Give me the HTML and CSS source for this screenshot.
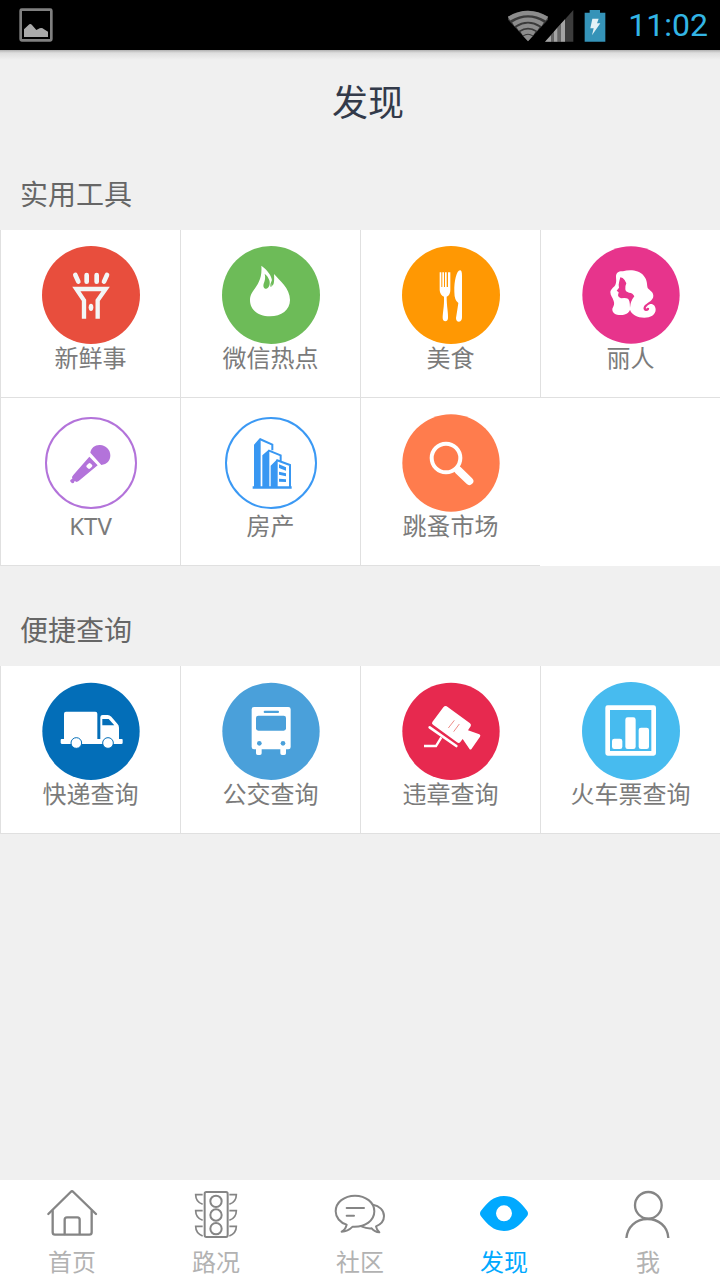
FILE: index.html
```html
<!DOCTYPE html>
<html lang="zh-CN">
<head>
<meta charset="utf-8">
<meta name="viewport" content="width=device-width, initial-scale=1">
<title>发现</title>
<link rel="stylesheet" href="styles.css">
</head>
<body>
<div class="screen">
  <div class="status">
    <svg class="status-photo" viewBox="57 24 102 102" aria-hidden="true">
      <rect x="62" y="29" width="92" height="92" rx="3" fill="none" stroke="#808080" stroke-width="8"/>
      <path d="M72 111V88L88 73Q92 70 96 75L109 90L119 85Q126 82 132 88L144 95V111Z" fill="#aaa"/>
    </svg>
    <div class="status-right">
      <svg class="status-signal" viewBox="87 24 198 99" aria-hidden="true">
        <path d="M87 47Q147 12 207 47V56L147 121L87 56Z" fill="#3a3a3a"/>
        <g fill="none" stroke="#8c8c8c" stroke-width="13">
          <path d="M90 53Q147 19 204 53"/>
          <path d="M103 70Q147 42 191 70"/>
          <path d="M116 84Q147 64 178 84"/>
          <path d="M128 98Q147 86 166 98"/>
        </g>
        <path d="M133 106Q147 97 161 106L147 121Z" fill="#8c8c8c"/>
        <path d="M198 122L283 27V122Z" fill="#3c3c3c"/>
        <path d="M198 122L217 101V122ZM224 122V93L236 79V122ZM245 122V69L258 55V122Z" fill="#a3a3a3"/>
        <path d="M217 122V101L224 93V122ZM236 122V79L245 69V122Z" fill="#666"/>
      </svg>
      <svg class="status-battery" viewBox="315 24 66 99" aria-hidden="true">
        <path d="M317 35H332V27H363V35H379V122H317Z" fill="#3593b8"/>
        <path d="M340 53H359L354 67H364L339 103L344 82H334Z" fill="#e3f1f6"/>
      </svg>
      <time class="clock">11:02</time>
    </div>
  </div>

  <header class="header"><h1 class="title">发现</h1></header>

  <main class="content">
    <section class="group">
      <h2 class="group-title">实用工具</h2>
      <div class="grid">
        <a class="cell" href="#">
          <svg class="cell-icon" viewBox="126 258 294 294" aria-hidden="true">
            <circle cx="273" cy="405" r="147" fill="#e84e3d"/>
            <g fill="none" stroke="#f3f6f6" stroke-width="14">
              <path stroke-linecap="round" d="M226 345L235 365M260 345V365M290 345V365M321 345L312 365"/>
              <path stroke-width="13" d="M252 476V421L229 387H317L293 421V476"/>
            </g>
            <ellipse cx="273" cy="442" rx="7" ry="11" fill="#f3f6f6"/>
          </svg>
          <span class="cell-label">新鲜事</span>
        </a>
        <a class="cell" href="#">
          <svg class="cell-icon" viewBox="666 258 294 294" aria-hidden="true">
            <circle cx="813" cy="405" r="147" fill="#6dbb58"/>
            <path fill="#fff" d="M784 317C803 331 815 347 816 362C816 370 814 375 817 377C823 374 823 357 822 342C837 360 870 384 870 420C870 450 844 469 810 469C775 469 750 450 750 420C750 387 789 378 784 317Z"/>
            <path fill="#6dbb58" d="M794 341C797 352 795 361 791 371C788 382 794 387 799 386C808 384 811 371 808 361C805 351 799 345 794 341Z"/>
            <path fill="none" stroke="#6dbb58" stroke-width="4" d="M813 380Q812 372 818 360"/>
          </svg>
          <span class="cell-label">微信热点</span>
        </a>
        <a class="cell" href="#">
          <svg class="cell-icon" viewBox="126 48 294 294" aria-hidden="true">
            <circle cx="273" cy="195" r="147" fill="#ff9803"/>
            <path fill="#fff" d="M239 127H244V171H247V127H252V171H255V127H260V171H264V127H271V180Q271 196 260 200C260 230 265 247 264 265Q263 274 256 274Q249 274 248 265C248 247 253 230 252 200Q240 196 239 180Z"/>
            <path fill="#fff" d="M300 121Q306 121 306 137V262Q306 274 297 275Q288 275 288 264Q292 240 295 219Q283 211 283 185C282 153 290 121 300 121Z"/>
          </svg>
          <span class="cell-label">美食</span>
        </a>
        <a class="cell" href="#">
          <svg class="cell-icon" viewBox="666 48 294 294" aria-hidden="true">
            <circle cx="813" cy="195" r="146" fill="#e7348c"/>
            <path fill="#fff" d="M768 140C768 127 777 123 789 124C808 118 838 120 851 137C863 151 860 162 863 174C870 182 880 186 880 197C880 211 864 217 856 224C849 230 848 241 858 243C866 243 869 238 867 234Q862 231 858 237Q855 232 862 227C874 216 887 225 887 239C887 254 871 263 853 263C832 263 814 253 810 239C807 249 795 255 783 255C766 255 756 248 757 236C762 227 764 221 761 213C758 202 751 197 751 186C753 175 764 172 767 162C770 153 768 147 768 140Z"/>
            <path fill="#e7348c" d="M781 142L778 153L776 164L777 173L770 182L776 187L774 196Q775 204 783 205Q797 203 804 206Q810 211 810 233Q811 214 823 199Q819 189 807 188Q797 186 796 178Q795 168 799 160Q797 151 788 144Z"/>
          </svg>
          <span class="cell-label">丽人</span>
        </a>
        <a class="cell" href="#">
          <svg class="cell-icon" viewBox="126 42 294 294" aria-hidden="true">
            <circle cx="273" cy="189" r="135" fill="#fff" stroke="#b373da" stroke-width="6"/>
            <path fill="#b373da" d="M271 158C273 143 286 134 300 135C318 136 331 149 331 166C331 182 321 194 304 195Z"/>
            <path fill="#b373da" d="M268 170L293 196L236 243L230 246L224 243L221 249L216 250L210 243L212 239L217 236L216 231L220 225Z"/>
            <rect x="261" y="190" width="14" height="16" rx="4" transform="rotate(45 268 198)" fill="#fff"/>
          </svg>
          <span class="cell-label">KTV</span>
        </a>
        <a class="cell" href="#">
          <svg class="cell-icon" viewBox="6 42 294 294" aria-hidden="true">
            <circle cx="153" cy="189" r="135" fill="#fff" stroke="#3b99f4" stroke-width="6"/>
            <g fill="#3897f2">
              <path d="M102 134L119 115L122 118V262H102ZM127 166L146 149L148 152V262H127ZM152 197L170 179L173 183V262H152Z"/>
              <path d="M98 259H215V266H98Z"/>
              <path d="M177 193L198 202V212L177 204ZM177 215L198 220V229L177 224ZM177 236L198 238V246L177 245Z"/>
            </g>
            <path fill="none" stroke="#3897f2" stroke-width="6" d="M119 117L157 134V151M145 151L182 166V182M169 180L210 195V262"/>
          </svg>
          <span class="cell-label">房产</span>
        </a>
        <a class="cell" href="#">
          <svg class="cell-icon" viewBox="546 42 294 294" aria-hidden="true">
            <circle cx="693" cy="189" r="146" fill="#ff7c4d"/>
            <circle cx="678" cy="174" r="43" fill="none" stroke="#fff" stroke-width="12"/>
            <path d="M706 203L714 210" stroke="#fff" stroke-width="15"/>
            <path d="M715 211L748 243" stroke="#fff" stroke-width="24" stroke-linecap="round"/>
          </svg>
          <span class="cell-label">跳蚤市场</span>
        </a>
      </div>
    </section>

    <section class="group">
      <h2 class="group-title">便捷查询</h2>
      <div class="grid">
        <a class="cell" href="#">
          <svg class="cell-icon" viewBox="126 246 294 294" aria-hidden="true">
            <circle cx="273" cy="394" r="146" fill="#036eb8"/>
            <path fill="#fff" d="M198 335H286Q292 335 292 341V417H301V352Q301 345 308 345H323Q329 345 334 350L352 371Q357 376 357 383V417H366Q368 417 368 420V428Q368 432 364 432H187Q182 432 182 428V420Q182 417 185 417H192V341Q192 335 198 335Z"/>
            <path fill="#036eb8" d="M307 357H326L343 376H307Z"/>
            <g fill="#fff" stroke="#036eb8" stroke-width="3"><circle cx="229" cy="429" r="16"/><circle cx="324" cy="429" r="16"/></g>
          </svg>
          <span class="cell-label">快递查询</span>
        </a>
        <a class="cell" href="#">
          <svg class="cell-icon" viewBox="666 246 294 294" aria-hidden="true">
            <circle cx="813" cy="394" r="146" fill="#4aa0da"/>
            <path fill="#fff" d="M762 321H865Q872 321 872 328V441Q872 448 865 448H858V460Q858 465 853 465H846Q841 465 841 460V448H785V460Q785 465 780 465H773Q768 465 768 460V448H762Q755 448 755 441V328Q755 321 762 321Z"/>
            <g fill="#4aa0da"><rect x="791" y="332" width="46" height="7" rx="3"/><rect x="768" y="347" width="90" height="45" rx="7"/><circle cx="778" cy="430" r="7"/><circle cx="849" cy="430" r="7"/></g>
          </svg>
          <span class="cell-label">公交查询</span>
        </a>
        <a class="cell" href="#">
          <svg class="cell-icon" viewBox="126 66 294 294" aria-hidden="true">
            <circle cx="273" cy="214" r="146" fill="#e7294f"/>
            <path fill="#fff" d="M260 139L330 190Q335 194 332 199L324 211L358 223Q363 225 360 230L335 266Q331 271 328 266L308 237L301 246Q297 252 291 247L219 194Q214 191 217 186L250 142Q255 136 260 139Z"/>
            <path d="M209 202L289 258" stroke="#fff" stroke-width="8" stroke-linecap="round"/>
            <path d="M244 232L228 258H192" fill="none" stroke="#fff" stroke-width="7"/>
            <path d="M283 181L265 204M298 192L281 215" stroke="#ee8d88" stroke-width="3"/>
          </svg>
          <span class="cell-label">违章查询</span>
        </a>
        <a class="cell" href="#">
          <svg class="cell-icon" viewBox="666 66 294 294" aria-hidden="true">
            <circle cx="813" cy="213" r="147" fill="#47bbef"/>
            <rect x="743" y="143" width="138" height="137" fill="none" stroke="#fff" stroke-width="14" stroke-linejoin="round"/>
            <g fill="#fff"><rect x="756" y="236" width="31" height="31" rx="7"/><rect x="796" y="172" width="31" height="95" rx="7"/><rect x="836" y="203" width="31" height="64" rx="7"/></g>
          </svg>
          <span class="cell-label">火车票查询</span>
        </a>
      </div>
    </section>
  </main>

  <nav class="tabs">
    <a class="tab" href="#">
      <svg class="tab-icon" viewBox="135 54 162 150" aria-hidden="true">
        <g fill="none" stroke="#858585" stroke-width="7" stroke-linecap="round" stroke-linejoin="round">
          <path d="M145 132L212 66Q216 62 220 66L288 132"/>
          <path d="M158 122V187Q158 194 165 194H268Q275 194 275 187V122"/>
          <path d="M194 192V149Q194 142 201 142H232Q239 142 239 149V192"/>
        </g>
      </svg>
      <span class="tab-label">首页</span>
    </a>
    <a class="tab" href="#">
      <svg class="tab-icon" viewBox="567 54 162 150" aria-hidden="true">
        <g fill="none" stroke="#858585" stroke-width="6">
          <rect x="614" y="66" width="69" height="135" rx="5"/>
          <circle cx="648" cy="94" r="17"/><circle cx="648" cy="135" r="17"/><circle cx="648" cy="176" r="17"/>
          <path stroke-width="5" d="M608 74H587Q587 95 608 103M608 122H587Q587 143 608 151M608 169H587Q587 190 608 198M688 74H709Q709 95 688 103M688 122H709Q709 143 688 151M688 169H709Q709 190 688 198"/>
        </g>
      </svg>
      <span class="tab-label">路况</span>
    </a>
    <a class="tab" href="#">
      <svg class="tab-icon" viewBox="99 54 162 150" aria-hidden="true">
        <g fill="none" stroke="#858585" stroke-width="6" stroke-linecap="round" stroke-linejoin="round">
          <path d="M140 164C120 158 107 142 107 124C107 97 133 77 165 77C197 77 223 97 223 124C223 151 197 172 158 170Q143 185 125 185Q136 179 140 164Z"/>
          <path d="M219 104C238 107 252 121 252 138C252 152 243 163 228 169Q230 180 238 187Q224 186 215 175Q199 176 186 170"/>
          <path d="M140 114H192M140 137H162"/>
        </g>
      </svg>
      <span class="tab-label">社区</span>
    </a>
    <a class="tab tab-active" href="#" aria-current="page">
      <svg class="tab-icon" viewBox="531 54 162 150" aria-hidden="true">
        <path fill="#00a9ff" fill-rule="evenodd" d="M543 122C563 98 579 78 612 78C645 78 661 98 681 122Q687 130 681 139C661 163 645 183 612 183C579 183 563 163 543 139Q537 130 543 122ZM612 106A24 24 0 1 0 612 154A24 24 0 1 0 612 106Z"/>
      </svg>
      <span class="tab-label">发现</span>
    </a>
    <a class="tab" href="#">
      <svg class="tab-icon" viewBox="183 54 162 150" aria-hidden="true">
        <g fill="none" stroke="#858585" stroke-width="7">
          <circle cx="265" cy="106" r="40"/>
          <path d="M199 207C201 170 229 147 262 147C295 147 323 168 325 204"/>
        </g>
      </svg>
      <span class="tab-label">我</span>
    </a>
  </nav>
</div>
</body>
</html>
```
FILE: styles.css
```css
* {
  box-sizing: border-box;
}

body {
  margin: 0;
  background: #f0f0f0;
  font-family: "Noto Sans", "Noto Sans CJK SC", sans-serif;
}

a {
  color: inherit;
  text-decoration: none;
}

svg {
  display: block;
}

.screen {
  display: flex;
  flex-direction: column;
  min-height: 100vh;
}

.status {
  display: flex;
  align-items: center;
  justify-content: space-between;
  height: 50px;
  padding: 0 12px 0 19px;
  background: #000;
}

.status-photo {
  width: 34px;
  height: 34px;
}

.status-right {
  display: flex;
  align-items: center;
  gap: 10px;
}

.status-signal {
  width: 66px;
  height: 33px;
}

.status-battery {
  width: 22px;
  height: 33px;
}

.clock {
  margin-left: 12px;
  color: #33b5e5;
  font-family: Roboto, sans-serif;
  font-size: 32px;
  line-height: 50px;
}

.header {
  padding: 27px 0 23px;
  background: linear-gradient(#b0b0b0, #dedede 3px, #f0f0f0 10px);
}

.title {
  margin: 0;
  padding-left: 16px;
  color: #333a4a;
  font-size: 36px;
  font-weight: 400;
  line-height: 52px;
  text-align: center;
}

.content {
  flex: 1;
}

.group {
  padding-top: 22px;
}

.group + .group {
  padding-top: 44px;
}

.group-title {
  margin: 0;
  padding: 0 20px 16px;
  color: #666;
  font-size: 28px;
  font-weight: 400;
  line-height: 40px;
}

.grid {
  display: grid;
  grid-template-columns: repeat(4, 1fr);
  background: #fff;
}

.cell {
  display: flex;
  flex-direction: column;
  align-items: center;
  padding: 16px 0 25px;
  border-left: 1px solid #e0e0e0;
  border-bottom: 1px solid #e0e0e0;
}

.cell-icon {
  width: 98px;
  height: 98px;
}

.cell-label {
  color: #7b7b7b;
  font-size: 24px;
  line-height: 28px;
}

.tabs {
  display: grid;
  grid-template-columns: repeat(5, 1fr);
  background: #fff;
}

.tab {
  display: flex;
  flex-direction: column;
  align-items: center;
  gap: 10px;
  padding: 8px 0 4px;
  color: #b2b2b2;
}

.tab-active {
  color: #00a9ff;
}

.tab-icon {
  width: 54px;
  height: 50px;
}

.tab-label {
  font-size: 24px;
  line-height: 28px;
}
```
